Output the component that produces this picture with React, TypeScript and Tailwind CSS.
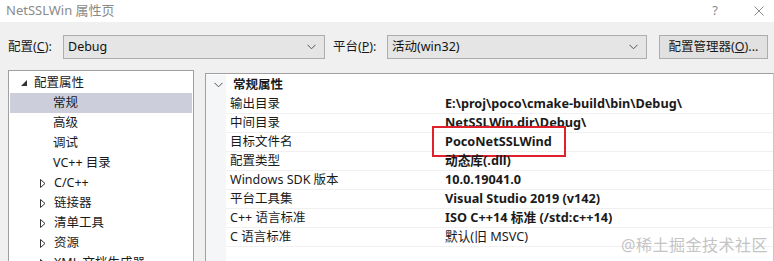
import React from 'react';

const font = { fontFamily: '"Noto Sans", "Noto Sans CJK SC", sans-serif' };

function Chevron({ className = '' }: { className?: string }) {
    return (
        <svg width="9" height="6" viewBox="0 0 9 6" className={className}>
            <path d="M0.5 0.8 L4.5 4.8 L8.5 0.8" fill="none" stroke="#555" strokeWidth="1" />
        </svg>
    );
}

function Dropdown({ value, width }: { value: string; width: string }) {
    return (
        <div className={`${width} h-[24px] flex items-center justify-between border border-[#adadad] bg-[#e5e5e5] pl-[4px] pr-[8px]`}>
            <span className="text-[12.5px] text-[#111]">{value}</span>
            <Chevron />
        </div>
    );
}

const treeItems: { label: string; kind: 'open' | 'leaf' | 'closed'; selected?: boolean }[] = [
    { label: '配置属性', kind: 'open' },
    { label: '常规', kind: 'leaf', selected: true },
    { label: '高级', kind: 'leaf' },
    { label: '调试', kind: 'leaf' },
    { label: 'VC++ 目录', kind: 'leaf' },
    { label: 'C/C++', kind: 'closed' },
    { label: '链接器', kind: 'closed' },
    { label: '清单工具', kind: 'closed' },
    { label: '资源', kind: 'closed' },
    { label: 'XML 文档生成器', kind: 'closed' },
];

const props: { name: string; value: string; bold: boolean; boxed?: boolean }[] = [
    { name: '输出目录', value: 'E:\\proj\\poco\\cmake-build\\bin\\Debug\\', bold: true },
    { name: '中间目录', value: 'NetSSLWin.dir\\Debug\\', bold: true },
    { name: '目标文件名', value: 'PocoNetSSLWind', bold: true, boxed: true },
    { name: '配置类型', value: '动态库(.dll)', bold: true },
    { name: 'Windows SDK 版本', value: '10.0.19041.0', bold: true },
    { name: '平台工具集', value: 'Visual Studio 2019 (v142)', bold: true },
    { name: 'C++ 语言标准', value: 'ISO C++14 标准 (/std:c++14)', bold: true },
    { name: 'C 语言标准', value: '默认(旧 MSVC)', bold: false },
];

export default function App() {
    return (
        <div className="relative w-[774px] h-[261px] overflow-hidden bg-[#f0f0f0] text-[#1a1a1a]" style={font}>
            {/* Title bar */}
            <div className="h-[22px] bg-white flex items-center justify-between pl-[6px] pr-[10px]">
                <span className="text-[13px] text-[#8a8a8a]">NetSSLWin 属性页</span>
                <div className="flex items-center gap-[36px] text-[#8a8a8a]">
                    <span className="text-[13px]">?</span>
                    <svg width="10" height="10" viewBox="0 0 10 10">
                        <path d="M0.5 0.5 L9.5 9.5 M9.5 0.5 L0.5 9.5" stroke="#8a8a8a" strokeWidth="1" />
                    </svg>
                </div>
            </div>

            {/* Config row */}
            <div className="flex items-center mt-[13px] pl-[8px] h-[24px]">
                <span className="text-[12.5px] w-[55px]">配置(<u>C</u>):</span>
                <Dropdown value="Debug" width="w-[262px]" />
                <span className="text-[12.5px] ml-[8px] w-[54px]">平台(<u>P</u>):</span>
                <Dropdown value="活动(win32)" width="w-[260px]" />
                <div className="ml-[12px] w-[109px] h-[24px] border border-[#adadad] bg-[#e1e1e1] flex items-center justify-center text-[12.5px]">
                    配置管理器(<u>O</u>)...
                </div>
            </div>

            {/* Main area */}
            <div className="flex mt-[11px] pl-[8px] gap-[11px]">
                {/* Tree */}
                <div className="w-[186px] h-[200px] bg-white border border-[#a0a0a0] pt-[2px] px-[1px]">
                    {treeItems.map((it) => (
                        <div
                            key={it.label}
                            className={`h-[20px] flex items-center text-[12.5px] ${it.selected ? 'bg-[#cccedb]' : ''}`}
                        >
                            {it.kind === 'open' && (
                                <>
                                    <svg width="6" height="6" viewBox="0 0 6 6" className="ml-[11px] mr-[7px]">
                                        <path d="M6 0 L6 6 L0 6 Z" fill="#333" />
                                    </svg>
                                    <span>{it.label}</span>
                                </>
                            )}
                            {it.kind === 'leaf' && <span className="ml-[43px]">{it.label}</span>}
                            {it.kind === 'closed' && (
                                <>
                                    <svg width="6" height="9" viewBox="0 0 6 9" className="ml-[30px] mr-[8px]">
                                        <path d="M0.5 0.5 L5 4.5 L0.5 8.5 Z" fill="none" stroke="#333" strokeWidth="1" />
                                    </svg>
                                    <span>{it.label}</span>
                                </>
                            )}
                        </div>
                    ))}
                </div>

                {/* Property grid */}
                <div className="flex-1 h-[200px] mt-[3px] bg-white border border-[#a0a0a0] border-r-[#c8c8c8] pt-[1px] flex">
                    <div className="w-[20px] bg-[#f5f6f8]" />
                    <div className="flex-1">
                        <div className="h-[20px] flex items-center -ml-[12px]">
                            <Chevron className="mr-[10px]" />
                            <span className="text-[12.5px] font-bold">常规属性</span>
                        </div>
                        {props.map((p) => (
                            <div key={p.name} className="h-[19px] flex items-center border-b border-[#f0f0f0]">
                                <span className="w-[219px] pl-[4px] text-[12.5px]">{p.name}</span>
                                <span className={`relative text-[12.7px] ${p.bold ? 'font-bold' : ''}`}>
                                    {p.value}
                                    {p.boxed && (
                                        <span className="absolute -left-[13px] -right-[14px] -top-[6px] -bottom-[5px] border-[2px] border-[#e0202a]" />
                                    )}
                                </span>
                            </div>
                        ))}
                    </div>
                </div>
            </div>

            {/* Watermark */}
            <div className="absolute right-[6px] bottom-[4px] text-[16px] text-[#c4c4c4] tracking-[0.5px]">
                @稀土掘金技术社区
            </div>
        </div>
    );
}
